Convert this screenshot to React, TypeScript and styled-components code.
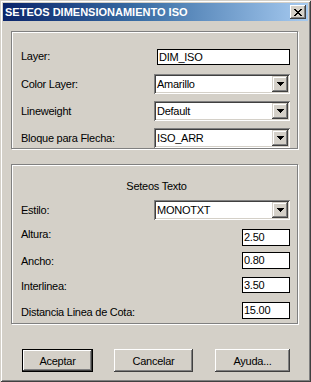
import React from "react";
import styled, { createGlobalStyle } from "styled-components";

const Global = createGlobalStyle`
  html, body { margin: 0; padding: 0; background: #d4d0c8; }
  body { font-family: "Liberation Sans", Arial, sans-serif; font-size: 11px; color: #000; letter-spacing: -0.25px; }
`;

const Window = styled.div`
  box-sizing: border-box;
  width: 311px;
  height: 382px;
  background: #d4d0c8;
  padding: 3px;
  display: flex;
  flex-direction: column;
  box-shadow: inset 1px 1px 0 #d4d0c8, inset -1px -1px 0 #404040,
    inset 2px 2px 0 #ffffff, inset -2px -2px 0 #808080;
`;

const TitleBar = styled.div`
  height: 18px;
  flex: none;
  display: flex;
  align-items: center;
  justify-content: space-between;
  padding: 0 2px 0 2px;
  background: linear-gradient(90deg, #0a246a 0%, #3a6ea5 45%, #a6caf0 100%);
  color: #fff;
  font-weight: bold;
  font-size: 11px;
  letter-spacing: 0px;
`;

const CloseButton = styled.div`
  box-sizing: border-box;
  width: 16px;
  height: 14px;
  background: #d4d0c8;
  display: flex;
  align-items: center;
  justify-content: center;
  box-shadow: inset -1px -1px 0 #404040, inset 1px 1px 0 #ffffff,
    inset -2px -2px 0 #808080;
`;

const Body = styled.div`
  flex: 1;
  display: flex;
  flex-direction: column;
  padding: 10px 10px 0 8px;
`;

const Group = styled.div<{ $h: number; $mt?: number }>`
  box-sizing: border-box;
  width: 287px;
  height: ${(p) => p.$h}px;
  margin-top: ${(p) => p.$mt ?? 0}px;
  border: 1px solid #808080;
  box-shadow: 1px 1px 0 #ffffff, inset 1px 1px 0 #ffffff;
  display: flex;
  flex-direction: column;
  padding: 0 7px 0 9px;
`;

const GroupTitle = styled.div`
  text-align: center;
  margin-top: 15px;
  line-height: 13px;
  height: 13px;
  padding-left: 2px;
`;

const Row = styled.div<{ $h: number; $mt: number }>`
  display: flex;
  align-items: center;
  justify-content: space-between;
  height: ${(p) => p.$h}px;
  margin-top: ${(p) => p.$mt}px;
`;

const Label = styled.span<{ $dy?: number }>`
  white-space: nowrap;
  position: relative;
  top: ${(p) => p.$dy ?? 0}px;
`;

const Edit = styled.div<{ $w: number; $h: number }>`
  box-sizing: border-box;
  width: ${(p) => p.$w}px;
  height: ${(p) => p.$h}px;
  background: #fff;
  border: 1px solid #000;
  padding: 0 1px;
  display: flex;
  align-items: center;
  line-height: 13px;
`;

const Combo = styled.div`
  box-sizing: border-box;
  width: 136px;
  height: 20px;
  background: #fff;
  display: flex;
  align-items: center;
  justify-content: space-between;
  padding: 2px 2px 2px 3px;
  box-shadow: inset 1px 1px 0 #808080, inset -1px -1px 0 #ffffff,
    inset 2px 2px 0 #404040, inset -2px -2px 0 #d4d0c8;
`;

const ComboText = styled.span`
  line-height: 13px;
`;

const DropButton = styled.div`
  box-sizing: border-box;
  width: 16px;
  height: 16px;
  background: #d4d0c8;
  display: flex;
  align-items: center;
  justify-content: center;
  box-shadow: inset -1px -1px 0 #404040, inset 1px 1px 0 #d4d0c8,
    inset -2px -2px 0 #808080, inset 2px 2px 0 #ffffff;
`;

const ButtonBar = styled.div`
  display: flex;
  align-items: center;
  margin-top: 25px;
  padding-left: 11px;
`;

const Button = styled.div<{ $w: number; $ml: number; $default?: boolean }>`
  box-sizing: border-box;
  width: ${(p) => p.$w}px;
  height: 23px;
  margin-left: ${(p) => p.$ml}px;
  display: flex;
  align-items: center;
  justify-content: center;
  background: #d4d0c8;
  border: ${(p) => (p.$default ? "1px solid #000" : "none")};
  box-shadow: inset -1px -1px 0 #404040, inset 1px 1px 0 #ffffff,
    inset -2px -2px 0 #808080;
`;

const Arrow = () => (
  <svg width="7" height="4" viewBox="0 0 7 4">
    <path d="M0 0h7v1H0zM1 1h5v1H1zM2 2h3v1H2zM3 3h1v1H3z" fill="#000" />
  </svg>
);

const CloseIcon = () => (
  <svg width="8" height="7" viewBox="0 0 8 7">
    <path
      d="M0 0h2v1H0zM6 0h2v1H6zM1 1h2v1H1zM5 1h2v1H5zM2 2h4v1H2zM3 3h2v1H3zM2 4h4v1H2zM1 5h2v1H1zM5 5h2v1H5zM0 6h2v1H0zM6 6h2v1H6z"
      fill="#000"
    />
  </svg>
);

const ComboBox = ({ value }: { value: string }) => (
  <Combo>
    <ComboText>{value}</ComboText>
    <DropButton>
      <Arrow />
    </DropButton>
  </Combo>
);

export default function App() {
  return (
    <>
      <Global />
      <Window>
        <TitleBar>
          <span>SETEOS DIMENSIONAMIENTO ISO</span>
          <CloseButton>
            <CloseIcon />
          </CloseButton>
        </TitleBar>
        <Body>
          <Group $h={118}>
            <Row $h={16} $mt={17}>
              <Label $dy={-1}>Layer:</Label>
              <Edit $w={133} $h={16}>DIM_ISO</Edit>
            </Row>
            <Row $h={20} $mt={9}>
              <Label>Color Layer:</Label>
              <ComboBox value="Amarillo" />
            </Row>
            <Row $h={20} $mt={7}>
              <Label>Lineweight</Label>
              <ComboBox value="Default" />
            </Row>
            <Row $h={20} $mt={7}>
              <Label>Bloque para Flecha:</Label>
              <ComboBox value="ISO_ARR" />
            </Row>
          </Group>
          <Group $h={160} $mt={15}>
            <GroupTitle>Seteos Texto</GroupTitle>
            <Row $h={20} $mt={7}>
              <Label>Estilo:</Label>
              <ComboBox value="MONOTXT" />
            </Row>
            <Row $h={17} $mt={9}>
              <Label $dy={-4}>Altura:</Label>
              <Edit $w={48} $h={17}>2.50</Edit>
            </Row>
            <Row $h={17} $mt={6}>
              <Label>Ancho:</Label>
              <Edit $w={48} $h={17}>0.80</Edit>
            </Row>
            <Row $h={16} $mt={8}>
              <Label $dy={1}>Interlinea:</Label>
              <Edit $w={48} $h={16}>3.50</Edit>
            </Row>
            <Row $h={17} $mt={9}>
              <Label $dy={1}>Distancia Linea de Cota:</Label>
              <Edit $w={48} $h={17}>15.00</Edit>
            </Row>
          </Group>
          <ButtonBar>
            <Button $w={71} $ml={0} $default>
              Aceptar
            </Button>
            <Button $w={79} $ml={21}>
              Cancelar
            </Button>
            <Button $w={75} $ml={22}>
              Ayuda...
            </Button>
          </ButtonBar>
        </Body>
      </Window>
    </>
  );
}
